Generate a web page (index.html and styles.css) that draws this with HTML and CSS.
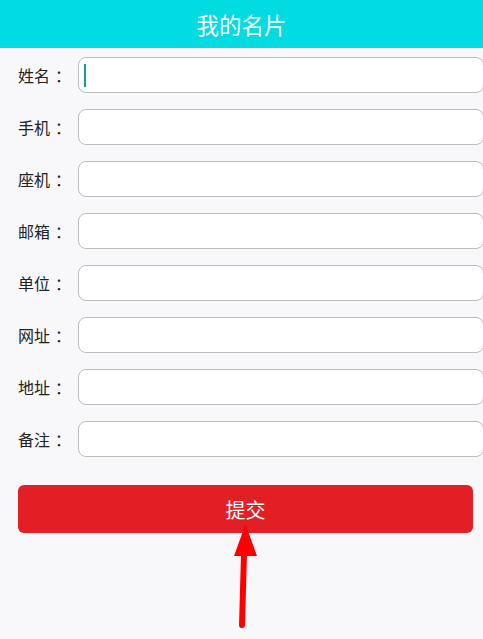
FILE: index.html
```html
<!DOCTYPE html>
<html lang="zh">
<head>
<meta charset="utf-8">
<title>我的名片</title>
<link rel="stylesheet" href="styles.css">
</head>
<body>
<header class="topbar">我的名片</header>
<main class="form">
  <div class="row"><label class="lbl">姓名<span class="colon">：</span></label><div class="field"><span class="caret"></span></div></div>
  <div class="row"><label class="lbl">手机<span class="colon">：</span></label><div class="field"></div></div>
  <div class="row"><label class="lbl">座机<span class="colon">：</span></label><div class="field"></div></div>
  <div class="row"><label class="lbl">邮箱<span class="colon">：</span></label><div class="field"></div></div>
  <div class="row"><label class="lbl">单位<span class="colon">：</span></label><div class="field"></div></div>
  <div class="row"><label class="lbl">网址<span class="colon">：</span></label><div class="field"></div></div>
  <div class="row"><label class="lbl">地址<span class="colon">：</span></label><div class="field"></div></div>
  <div class="row"><label class="lbl">备注<span class="colon">：</span></label><div class="field"></div></div>
  <div class="submit-wrap">
    <button class="submit">提交</button>
    <svg class="arrow" width="40" height="110" viewBox="0 0 40 110">
      <path d="M23 30 L21 101" stroke="#ff0000" stroke-width="6" stroke-linecap="round" fill="none"/>
      <polygon points="24.5,0 13,32 36,32" fill="#ff0000"/>
    </svg>
  </div>
</main>
</body>
</html>
```
FILE: styles.css
```css
* { box-sizing: border-box; }
html, body { margin: 0; padding: 0; }
body {
  width: 483px;
  height: 639px;
  overflow: hidden;
  background: #f8f8fa;
  font-family: "Noto Sans CJK SC", "Noto Sans", sans-serif;
}
.topbar {
  height: 48px;
  background: #00dce2;
  color: #fff;
  font-size: 22.5px;
  line-height: 48px;
  text-align: center;
}
.form {
  padding-top: 9px;
}
.row {
  display: flex;
  align-items: center;
  height: 36px;
  margin-bottom: 16px;
}
.lbl {
  width: 78px;
  padding-left: 18px;
  font-size: 16px;
  color: #222;
  white-space: nowrap;
}
.colon {
  margin-left: 5px;
}
.field {
  flex: 1;
  height: 36px;
  background: #fff;
  border: 1px solid #bdbdbd;
  border-radius: 8px;
  margin-right: -1px;
  display: flex;
  align-items: center;
  padding-left: 5px;
}
.caret {
  width: 2px;
  height: 23px;
  background: #169c8a;
}
.submit-wrap {
  position: relative;
  padding: 12px 10px 0 18px;
}
.submit {
  display: block;
  width: 455px;
  height: 48px;
  border: none;
  border-radius: 6px;
  background: #e31e24;
  color: #fff;
  font-family: "Noto Sans CJK SC", "Noto Sans", sans-serif;
  font-size: 20px;
  padding: 0;
}
.arrow {
  position: absolute;
  left: 221px;
  top: 51px;
}
```
